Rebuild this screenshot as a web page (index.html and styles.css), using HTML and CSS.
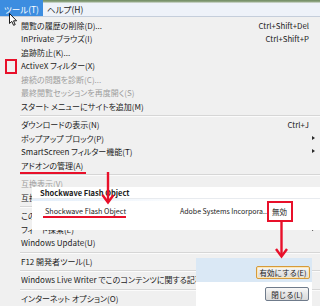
FILE: index.html
```html
<!DOCTYPE html>
<html lang="ja">
<head>
  <meta charset="UTF-8">
  <title>ツール メニュー - アドオンの管理</title>
  <link rel="stylesheet" href="styles.css">
</head>
<body>
  <div class="screen">

    <!-- Menu bar -->
    <div class="menubar">
      <span class="menubar-item active">ツール(T)</span>
      <span class="menubar-item">ヘルプ(H)</span>
    </div>

    <!-- Tools menu -->
    <ul class="menu">
      <li class="item"><span>閲覧の履歴の削除(D)...</span><span class="key">Ctrl+Shift+Del</span></li>
      <li class="item"><span>InPrivate ブラウズ(I)</span><span class="key">Ctrl+Shift+P</span></li>
      <li class="item"><span>追跡防止(K)...</span></li>
      <li class="item"><span>ActiveX フィルター(X)</span></li>
      <li class="item disabled"><span>接続の問題を診断(C)...</span></li>
      <li class="item disabled"><span>最終閲覧セッションを再度開く(S)</span></li>
      <li class="item"><span>スタート メニューにサイトを追加(M)</span></li>
      <li class="sep"></li>
      <li class="item"><span>ダウンロードの表示(N)</span><span class="key">Ctrl+J</span></li>
      <li class="item sub"><span>ポップアップ ブロック(P)</span></li>
      <li class="item sub"><span>SmartScreen フィルター機能(T)</span></li>
      <li class="item"><span>アドオンの管理(A)</span></li>
      <li class="sep"></li>
      <li class="item disabled"><span>互換表示(V)</span></li>
      <li class="item"><span>互換表示設定(B)</span></li>
      <li class="sep"></li>
      <li class="item"><span>このフィードを購読(F)...</span></li>
      <li class="item sub"><span>フィード探索(E)</span></li>
      <li class="item"><span>Windows Update(U)</span></li>
      <li class="sep"></li>
      <li class="item"><span>F12 開発者ツール(L)</span></li>
      <li class="sep"></li>
      <li class="item"><span class="clip-wide">Windows Live Writer でこのコンテンツに関する記事を書く(W)</span></li>
      <li class="sep"></li>
      <li class="item"><span>インターネット オプション(O)</span></li>
    </ul>

    <!-- Add-on manager excerpt -->
    <div class="addon-panel">
      <div class="addon-head">Shockwave Flash Object</div>
      <div class="addon-row">
        <span class="addon-name">Shockwave Flash Object</span>
        <span class="addon-pub">Adobe Systems Incorpora...</span>
        <span class="addon-status">無効</span>
      </div>
    </div>

    <!-- Add-on action buttons -->
    <div class="action-panel">
      <div class="action-top">
        <button class="btn btn-default">有効にする(E)</button>
      </div>
      <div class="action-bottom">
        <button class="btn btn-close">閉じる(L)</button>
      </div>
    </div>

    <!-- Red annotations -->
    <div class="mark mark-square"></div>
    <div class="mark mark-line mark-addon"></div>
    <div class="mark mark-line mark-flash"></div>
    <div class="mark mark-box"></div>

    <svg class="arrows" width="320" height="306" viewBox="0 0 320 306">
      <g fill="none" stroke="#e8102a" stroke-width="2.4">
        <path d="M108 172 V202"/>
        <path d="M102.5 195 L108 202.5 L113.5 195"/>
        <path d="M281.5 221 V256"/>
        <path d="M276 249 L281.5 256.5 L287 249"/>
      </g>
    </svg>

    <!-- Mouse pointer -->
    <svg class="cursor" width="9" height="13" viewBox="0 0 9 13">
      <path d="M0.5 0.5 L0.5 10.5 L2.8 8.4 L4.6 12.3 L6.2 11.6 L4.5 7.8 L7.6 7.8 Z" fill="#fff" stroke="#000" stroke-width="0.9" stroke-linejoin="round"/>
    </svg>

  </div>
</body>
</html>
```

FILE: styles.css
```css
* {
  box-sizing: border-box;
}

body {
  margin: 0;
  font-family: "Noto Sans CJK JP", "Liberation Sans", sans-serif;
  font-size: 8px;
  color: #1b1b1b;
  background: #f0f0f0;
}

.screen {
  position: relative;
  width: 320px;
  height: 306px;
  overflow: hidden;
  background: #f0f0f0;
  font-feature-settings: "palt";
}

/* Menu bar */
.menubar {
  display: flex;
  height: 17px;
  font-size: 8.5px;
  background: linear-gradient(#6f8a62 0, #97ab8a 2px, #eef2f9 3px, #eef2f9 100%);
  border-bottom: 1px solid #c5cedb;
}

.menubar-item {
  display: flex;
  align-items: center;
  padding: 2px 4px 0;
  white-space: nowrap;
}

.menubar-item.active {
  width: 43px;
  background: #3c8de0;
  color: #fff;
}

/* Menu list */
.menu {
  list-style: none;
  margin: 0;
  padding: 1.5px 0 0;
}

.item {
  position: relative;
  display: flex;
  align-items: center;
  justify-content: space-between;
  height: 13.5px;
  padding: 0 11px 0 21px;
  white-space: nowrap;
}

.item.disabled {
  color: #9d9d9d;
}

/* runs under the button panel */
.clip-wide {
  display: block;
  width: 175px;
  overflow: hidden;
}

.key {
  font-size: 7.8px;
}

.item.sub::after {
  content: "";
  position: absolute;
  right: 5px;
  top: 50%;
  margin-top: -2.5px;
  border-left: 3px solid #2a2a2a;
  border-top: 2.5px solid transparent;
  border-bottom: 2.5px solid transparent;
}

.sep {
  height: 5px;
  margin-left: 20px;
  background: linear-gradient(transparent 0 2px, #d6d6d6 2px 3px, #fbfbfb 3px 4px, transparent 4px);
}

/* Add-on manager excerpt */
.addon-panel {
  position: absolute;
  left: 32px;
  top: 187px;
  right: 0;
  height: 43px;
  background: #fff;
  white-space: nowrap;
}

.addon-head {
  height: 12px;
  line-height: 12px;
  padding-left: 8px;
  font-size: 7.5px;
  font-weight: bold;
  border-bottom: 1px solid #e8ebef;
}

.addon-row {
  display: flex;
  align-items: center;
  height: 24px;
  font-size: 7px;
  background: linear-gradient(to right, #e3eefa, #fff 60%) top / 100% 2px no-repeat;
}

.addon-name {
  flex: none;
  width: 148px;
  padding-left: 13px;
  font-size: 7.2px;
}

.addon-pub {
  flex: none;
  width: 92px;
}

.addon-status {
  font-size: 7.5px;
}

/* Action buttons */
.action-panel {
  position: absolute;
  left: 196px;
  top: 258px;
  width: 116px;
  height: 48px;
}

.action-top {
  display: flex;
  justify-content: flex-end;
  align-items: flex-end;
  height: 24px;
  padding: 0 2px 3px 0;
  background: #dae8f5;
}

.action-bottom {
  display: flex;
  justify-content: flex-end;
  align-items: center;
  height: 24px;
  padding-right: 3px;
  background: #fff;
}

.btn {
  padding: 0;
  font-family: inherit;
  font-size: 7.5px;
  color: #1b1b1b;
  border-radius: 2px;
  background: linear-gradient(#f8f8f8, #e6e6e6 50%, #dadada);
}

.btn-default {
  width: 54px;
  height: 13px;
  border: 1px solid #d59a3c;
  box-shadow: inset 0 0 0 1px #fde7b5;
}

.btn-close {
  width: 44px;
  height: 14px;
  border: 1px solid #6f7b8b;
}

/* Red annotations */
.mark {
  position: absolute;
}

.mark-square {
  left: 5px;
  top: 59px;
  width: 12px;
  height: 15px;
  border: 2px solid #e8102a;
}

.mark-line {
  height: 2px;
  background: #e8102a;
}

.mark-addon {
  left: 20px;
  top: 171.5px;
  width: 66px;
}

.mark-flash {
  left: 43px;
  top: 216px;
  width: 83px;
}

.mark-box {
  left: 267px;
  top: 201px;
  width: 26px;
  height: 21px;
  border: 2px solid #e8102a;
}

.arrows {
  position: absolute;
  left: 0;
  top: 0;
}

.cursor {
  position: absolute;
  left: 9px;
  top: 13px;
}
```
